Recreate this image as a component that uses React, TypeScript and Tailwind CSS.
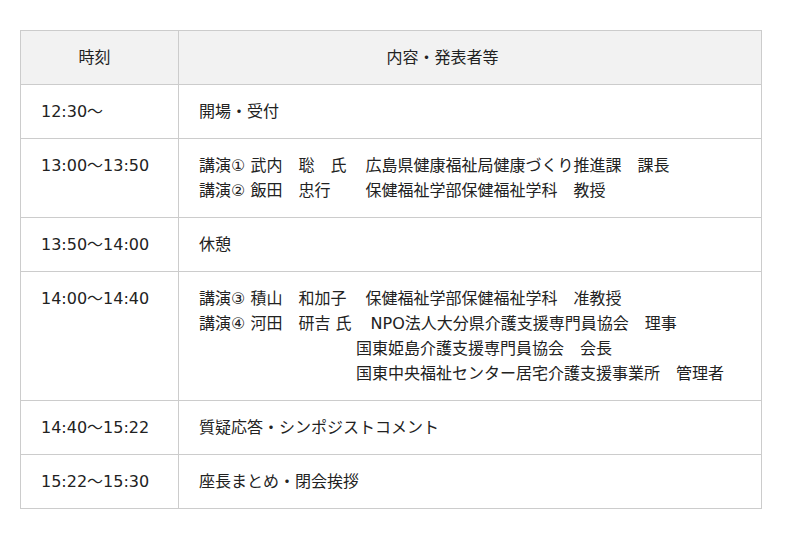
import React from "react";

const font = { fontFamily: '"DejaVu Sans", "Noto Sans CJK JP", sans-serif' };

type Line = { head?: string; text: string; indent?: boolean };
type Row = { time: string; lines: Line[] };

const rows: Row[] = [
  { time: "12:30～", lines: [{ text: "開場・受付" }] },
  {
    time: "13:00～13:50",
    lines: [
      { head: "講演① 武内　聡　氏　", text: "広島県健康福祉局健康づくり推進課　課長" },
      { head: "講演② 飯田　忠行　　", text: "保健福祉学部保健福祉学科　教授" },
    ],
  },
  { time: "13:50～14:00", lines: [{ text: "休憩" }] },
  {
    time: "14:00～14:40",
    lines: [
      { head: "講演③ 積山　和加子　", text: "保健福祉学部保健福祉学科　准教授" },
      { head: "講演④ 河田　研吉 氏　", text: "NPO法人大分県介護支援専門員協会　理事" },
      { text: "国東姫島介護支援専門員協会　会長", indent: true },
      { text: "国東中央福祉センター居宅介護支援事業所　管理者", indent: true },
    ],
  },
  { time: "14:40～15:22", lines: [{ text: "質疑応答・シンポジストコメント" }] },
  { time: "15:22～15:30", lines: [{ text: "座長まとめ・閉会挨拶" }] },
];

export default function App() {
  return (
    <div className="bg-white min-h-[539px] pl-[20px] pt-[30px] text-[#222]" style={font}>
      <table className="w-[742px] table-fixed border-collapse text-[16px] leading-[25px]">
        <colgroup>
          <col className="w-[158px]" />
          <col />
        </colgroup>
        <thead>
          <tr className="bg-[#f2f2f2]">
            <th className="border border-[#cccccc] pl-[10px] pr-[20px] py-[14px] text-center font-normal">
              時刻
            </th>
            <th className="border border-[#cccccc] pl-0 pr-[55px] py-[14px] text-center font-normal">
              内容・発表者等
            </th>
          </tr>
        </thead>
        <tbody>
          {rows.map((r) => (
            <tr key={r.time}>
              <td className="border border-[#cccccc] pl-[20px] pr-2 py-[14px] align-top whitespace-nowrap">
                {r.time}
              </td>
              <td className="border border-[#cccccc] pl-[20px] pr-2 py-[14px] align-top">
                {r.lines.map((l, i) => (
                  <div key={i} className={l.indent ? "pl-[157px] whitespace-pre" : "whitespace-pre"}>
                    {l.head ? <span>{l.head}</span> : null}
                    <span className={l.head ? "ml-[3px]" : ""}>{l.text}</span>
                  </div>
                ))}
              </td>
            </tr>
          ))}
        </tbody>
      </table>
    </div>
  );
}
